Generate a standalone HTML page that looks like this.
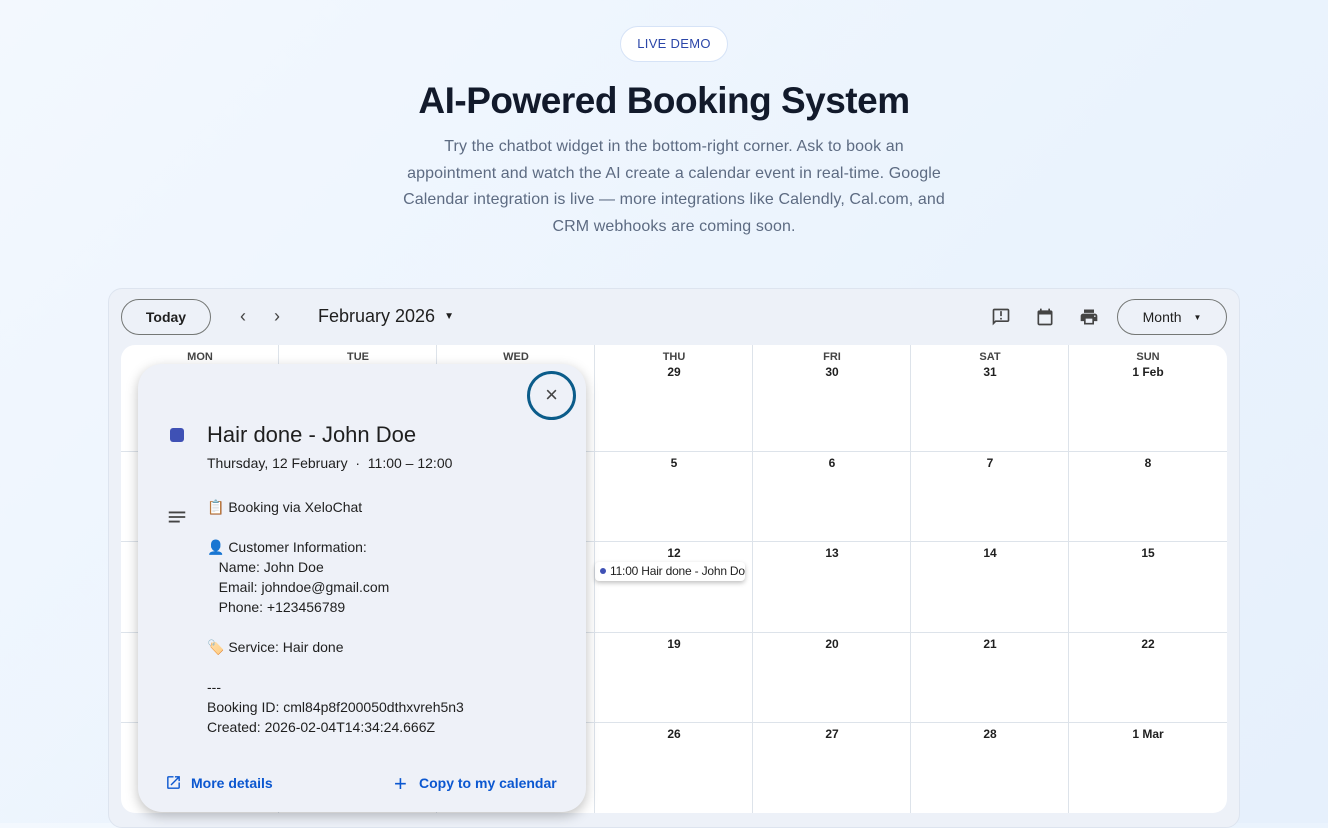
<!DOCTYPE html>
<html><head><meta charset="utf-8"><style>
*{box-sizing:border-box;margin:0;padding:0}
body{width:1328px;height:823px;overflow:hidden;background:linear-gradient(135deg,#f3f8fe,#eaf3fd 60%,#e6f0fc);font-family:"Liberation Sans",sans-serif;position:relative;color:#1f1f1f}
.a{position:absolute}
.badge{left:620px;top:26px;width:108px;height:36px;border-radius:18px;background:#fff;border:1px solid #d6e3f7;color:#2b46a8;font-size:13px;line-height:34px;text-align:center;letter-spacing:.3px}
h1{position:absolute;left:0;width:1328px;top:80px;text-align:center;font-size:37px;font-weight:bold;color:#121a2b;letter-spacing:-.5px}
.sub{left:284px;width:780px;top:134px;text-align:center;font-size:16px;line-height:26.5px;color:#5d6b82;letter-spacing:.1px}
.panel{left:108px;top:288px;width:1132px;height:540px;background:#edf1f8;border:1px solid #dde4ef;border-radius:14px}
.btn{border:1px solid #747775;border-radius:19px;height:36px;font-size:14px;font-weight:bold;line-height:34px;text-align:center;color:#1f1f1f}
.grid{left:121px;top:345px;width:1106px;height:468px;background:#fff;border-radius:14px;overflow:hidden}
.vl{position:absolute;top:0;width:1px;height:468px;background:#dde3ea}
.hl{position:absolute;left:0;width:1106px;height:1px;background:#dde3ea}
.dh{position:absolute;width:158px;text-align:center;font-size:11px;color:#444;font-weight:bold}
.dn{position:absolute;width:158px;text-align:center;font-size:12px;color:#1f1f1f;font-weight:bold}
.pop{left:138px;top:364px;width:448px;height:448px;background:#eef1f8;border-radius:24px;box-shadow:0 4px 12px rgba(0,0,0,.25)}
.t{position:absolute;font-size:14px;color:#1f1f1f;white-space:nowrap}
.lk{color:#0b57d0;font-weight:bold;font-size:14px}
</style></head><body>
<div class="a badge">LIVE DEMO</div>
<h1>AI-Powered Booking System</h1>
<div class="a sub">Try the chatbot widget in the bottom-right corner. Ask to book an<br>appointment and watch the AI create a calendar event in real-time. Google<br>Calendar integration is live — more integrations like Calendly, Cal.com, and<br>CRM webhooks are coming soon.</div>
<div class="a panel"></div>
<div class="a btn" style="left:121px;top:299px;width:90px">Today</div>
<div class="a" style="left:240px;top:306px;font-size:18px;color:#444">‹</div>
<div class="a" style="left:274px;top:306px;font-size:18px;color:#444">›</div>
<div class="a" style="left:318px;top:306px;font-size:18px;color:#1f1f1f">February 2026 <span style="font-size:10px;vertical-align:3px;margin-left:4px">▼</span></div>
<svg class="a" style="left:991px;top:307px" width="20" height="20" viewBox="0 0 24 24" fill="#444"><path d="M20 2H4c-1.1 0-2 .9-2 2v18l4-4h14c1.1 0 2-.9 2-2V4c0-1.1-.9-2-2-2zm0 14H5.2L4 17.2V4h16v12zM11 5h2v6h-2zm0 8h2v2h-2z"/></svg>
<svg class="a" style="left:1035px;top:307px" width="20" height="20" viewBox="0 0 24 24" fill="#444"><path d="M19 4h-1V2h-2v2H8V2H6v2H5c-1.1 0-2 .9-2 2v14c0 1.1.9 2 2 2h14c1.1 0 2-.9 2-2V6c0-1.1-.9-2-2-2zm0 16H5V9h14v11z"/></svg>
<svg class="a" style="left:1079px;top:307px" width="20" height="20" viewBox="0 0 24 24" fill="#444"><path d="M19 8H5c-1.66 0-3 1.34-3 3v6h4v4h12v-4h4v-6c0-1.66-1.34-3-3-3zm-3 11H8v-5h8v5zm3-7c-.55 0-1-.45-1-1s.45-1 1-1 1 .45 1 1-.45 1-1 1zm-1-9H6v4h12V3z"/></svg>
<div class="a btn" style="left:1117px;top:299px;width:110px;font-weight:normal">Month <span style="font-size:8px;vertical-align:2px;margin-left:8px">▼</span></div>
<div class="a grid">
<div class="vl" style="left:157px"></div><div class="vl" style="left:315px"></div><div class="vl" style="left:473px"></div><div class="vl" style="left:631px"></div><div class="vl" style="left:789px"></div><div class="vl" style="left:947px"></div>
<div class="hl" style="top:106px"></div><div class="hl" style="top:196px"></div><div class="hl" style="top:287px"></div><div class="hl" style="top:377px"></div>
<div class="dh" style="left:0;top:6px">MON</div><div class="dh" style="left:158px;top:6px">TUE</div><div class="dh" style="left:316px;top:6px">WED</div><div class="dh" style="left:474px;top:6px">THU</div><div class="dh" style="left:632px;top:6px">FRI</div><div class="dh" style="left:790px;top:6px">SAT</div><div class="dh" style="left:948px;top:6px">SUN</div>
<div class="dn" style="left:474px;top:20px">29</div><div class="dn" style="left:632px;top:20px">30</div><div class="dn" style="left:790px;top:20px">31</div><div class="dn" style="left:948px;top:20px">1 Feb</div>
<div class="dn" style="left:474px;top:111px">5</div><div class="dn" style="left:632px;top:111px">6</div><div class="dn" style="left:790px;top:111px">7</div><div class="dn" style="left:948px;top:111px">8</div>
<div class="dn" style="left:474px;top:201px">12</div><div class="dn" style="left:632px;top:201px">13</div><div class="dn" style="left:790px;top:201px">14</div><div class="dn" style="left:948px;top:201px">15</div>
<div class="dn" style="left:474px;top:292px">19</div><div class="dn" style="left:632px;top:292px">20</div><div class="dn" style="left:790px;top:292px">21</div><div class="dn" style="left:948px;top:292px">22</div>
<div class="dn" style="left:474px;top:382px">26</div><div class="dn" style="left:632px;top:382px">27</div><div class="dn" style="left:790px;top:382px">28</div><div class="dn" style="left:948px;top:382px">1 Mar</div>
<div style="position:absolute;left:474px;top:217px;width:150px;height:19px;background:#fff;border-radius:4px;box-shadow:0 2px 5px rgba(0,0,0,.25);font-size:12px;line-height:19px;padding-left:5px;white-space:nowrap;overflow:hidden;letter-spacing:-.2px"><span style="display:inline-block;width:6px;height:6px;border-radius:3px;background:#3f51b5;vertical-align:1px;margin-right:4px"></span>11:00 Hair done - John Doe</div>
</div>
<div class="a pop">
<div class="a" style="left:389px;top:7px;width:49px;height:49px;border:3px solid #0b5c8a;border-radius:50%;text-align:center;line-height:42px;font-size:22px;color:#444">×</div>
<div class="a" style="left:32px;top:64px;width:14px;height:14px;border-radius:3px;background:#3f51b5"></div>
<div class="t" style="left:69px;top:58px;font-size:22px">Hair done - John Doe</div>
<div class="t" style="left:69px;top:91px">Thursday, 12 February &nbsp;·&nbsp; 11:00 – 12:00</div>
<svg class="a" style="left:28px;top:142px" width="22" height="22" viewBox="0 0 24 24" fill="#444"><path d="M3 6h18v2H3zm0 5h18v2H3zm0 5h12v2H3z"/></svg>
<div class="t" style="left:69px;top:133px;line-height:20px">📋 Booking via XeloChat<br><br>👤 Customer Information:<br>&nbsp;&nbsp;&nbsp;Name: John Doe<br>&nbsp;&nbsp;&nbsp;Email: johndoe@gmail.com<br>&nbsp;&nbsp;&nbsp;Phone: +123456789<br><br>🏷️ Service: Hair done<br><br>---<br>Booking ID: cml84p8f200050dthxvreh5n3<br>Created: 2026-02-04T14:34:24.666Z</div>
<svg class="a" style="left:27px;top:410px" width="17" height="17" viewBox="0 0 24 24" fill="#0b57d0"><path d="M19 19H5V5h7V3H5a2 2 0 00-2 2v14a2 2 0 002 2h14c1.1 0 2-.9 2-2v-7h-2v7zM14 3v2h3.59l-9.83 9.83 1.41 1.41L19 6.41V10h2V3h-7z"/></svg>
<div class="t lk" style="left:53px;top:411px">More details</div>
<div class="t lk" style="left:256px;top:407px;font-size:22px;font-weight:normal">+</div>
<div class="t lk" style="left:281px;top:411px">Copy to my calendar</div>
</div>
</body></html>
